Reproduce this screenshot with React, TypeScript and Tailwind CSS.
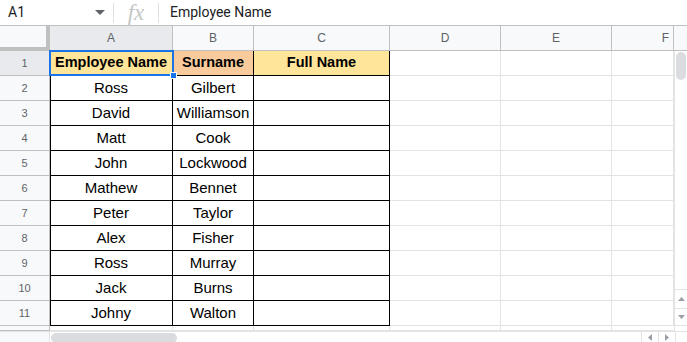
import React from 'react';

const rows = [
  ['Ross', 'Gilbert'],
  ['David', 'Williamson'],
  ['Matt', 'Cook'],
  ['John', 'Lockwood'],
  ['Mathew', 'Bennet'],
  ['Peter', 'Taylor'],
  ['Alex', 'Fisher'],
  ['Ross', 'Murray'],
  ['Jack', 'Burns'],
  ['Johny', 'Walton'],
];

const colWidths = 'grid-cols-[50px_123px_81px_136px_111px_111px_62px]';

function ColHeader({ label, active, align = 'center' }: { label: string; active?: boolean; align?: 'center' | 'right' }) {
  return (
    <div
      className={`h-[25px] border-r border-b border-[#c0c0c0] flex items-center text-[12px] text-[#5f6368] ${
        active ? 'bg-[#e8eaed]' : 'bg-[#f8f9fa]'
      } ${align === 'right' ? 'justify-end pr-[4px]' : 'justify-center'}`}
    >
      {label}
    </div>
  );
}

function RowHeader({ n, active }: { n: number; active?: boolean }) {
  return (
    <div
      className={`h-[25px] border-r border-b border-[#c0c0c0] flex items-center justify-center text-[11px] text-[#5f6368] ${
        active ? 'bg-[#e8eaed]' : 'bg-[#f8f9fa]'
      }`}
    >
      {n}
    </div>
  );
}

function Cell({ children, boxed, left, bg, bold }: { children?: React.ReactNode; boxed?: boolean; left?: boolean; bg?: string; bold?: boolean }) {
  return (
    <div
      className={`h-[25px] border-r border-b flex items-center justify-center whitespace-nowrap overflow-hidden ${
        boxed ? 'border-black' : 'border-[#e2e3e3]'
      } ${left ? 'shadow-[inset_1px_0_0_#000]' : ''} ${bg ?? 'bg-white'} ${
        bold ? 'font-bold text-[14.5px]' : 'text-[15px]'
      } text-black`}
    >
      {children}
    </div>
  );
}

export default function App() {
  return (
    <div className="w-[687px] h-[342px] bg-white overflow-hidden flex flex-col font-['Roboto',_'Liberation_Sans',_sans-serif]">
      {/* formula bar */}
      <div className="h-[26px] shrink-0 flex items-center border-b border-[#c0c0c0] text-[14px] text-[#202124]">
        <div className="w-[113px] flex items-center justify-between pl-[8px] pr-[8px]">
          <span>A1</span>
          <svg width="10" height="6" viewBox="0 0 10 6">
            <path d="M0 0 L10 0 L5 5 Z" fill="#5f6368" />
          </svg>
        </div>
        <div className="w-px h-[20px] bg-[#e0e0e0]" />
        <div className="w-[44px] flex justify-center text-[#c4c7c5] italic text-[23px] font-['Liberation_Serif',_serif] leading-none">
          fx
        </div>
        <div className="w-px h-[20px] bg-[#e0e0e0]" />
        <div className="pl-[11px]">Employee Name</div>
      </div>

      <div className="flex h-[305px] shrink-0">
        {/* sheet grid */}
        <div className={`grid ${colWidths} content-start w-[674px] font-['Liberation_Sans',_Arial,_sans-serif]`}>
          <div className="h-[25px] bg-[#f8f9fa] border-r-4 border-b-4 border-[#c0c0c0]" />
          <ColHeader label="A" active />
          <ColHeader label="B" />
          <ColHeader label="C" />
          <ColHeader label="D" />
          <ColHeader label="E" />
          <ColHeader label="F" align="right" />

          <RowHeader n={1} active />
          <div className="relative">
            <Cell boxed left bg="bg-[#ffe599]" bold>
              Employee Name
            </Cell>
            <div className="absolute -left-px -top-px right-[-1px] bottom-0 border-2 border-[#1a73e8] pointer-events-none" />
            <div className="absolute right-[-4px] bottom-[-3px] w-[7px] h-[7px] bg-[#1a73e8] border border-white" />
          </div>
          <Cell boxed bg="bg-[#f9cb9c]" bold>
            Surname
          </Cell>
          <Cell boxed bg="bg-[#ffe599]" bold>
            Full Name
          </Cell>
          <Cell />
          <Cell />
          <Cell />

          {rows.map(([first, last], i) => (
            <React.Fragment key={i}>
              <RowHeader n={i + 2} />
              <Cell boxed left>
                {first}
              </Cell>
              <Cell boxed>{last}</Cell>
              <Cell boxed />
              <Cell />
              <Cell />
              <Cell />
            </React.Fragment>
          ))}

          <div className="h-[5px] bg-[#f8f9fa] border-r border-b border-[#c0c0c0]" />
          <div className="h-[5px] border-r border-b border-[#e2e3e3]" />
          <div className="h-[5px] border-r border-b border-[#e2e3e3]" />
          <div className="h-[5px] border-r border-b border-[#e2e3e3]" />
          <div className="h-[5px] border-r border-b border-[#e2e3e3]" />
          <div className="h-[5px] border-r border-b border-[#e2e3e3]" />
          <div className="h-[5px] border-b border-[#e2e3e3]" />
        </div>

        {/* vertical scrollbar */}
        <div className="w-[13px] flex flex-col">
          <div className="h-[25px] bg-[#f8f9fa] border-b border-[#c0c0c0]" />
          <div className="flex-1 border-l border-[#e2e3e3] flex flex-col">
            <div className="pt-[1px] pl-[1px]">
              <div className="w-[10px] h-[28px] rounded-full bg-[#dadce0]" />
            </div>
            <div className="flex-1" />
            <div className="h-[19px] border-t border-[#e2e3e3] flex items-center justify-center">
              <svg width="7" height="4" viewBox="0 0 7 4">
                <path d="M0 4 L7 4 L3.5 0 Z" fill="#9aa0a6" />
              </svg>
            </div>
            <div className="h-[17px] border-t border-[#e2e3e3] flex items-center justify-center">
              <svg width="7" height="4" viewBox="0 0 7 4">
                <path d="M0 0 L7 0 L3.5 4 Z" fill="#9aa0a6" />
              </svg>
            </div>
            <div className="h-[6px] border-t border-[#e2e3e3]" />
          </div>
        </div>
      </div>

      {/* horizontal scrollbar */}
      <div className="flex h-[11px] shrink-0 border-t border-[#e2e3e3]">
        <div className="w-[50px] bg-[#f8f9fa] border-r border-[#e2e3e3]" />
        <div className="flex-1 pl-[1px] pt-[1px]">
          <div className="w-[126px] h-[10px] rounded-full bg-[#dadce0]" />
        </div>
        <div className="w-[17px] border-l border-[#e2e3e3] flex items-center justify-center">
          <svg width="4" height="7" viewBox="0 0 4 7">
            <path d="M4 0 L4 7 L0 3.5 Z" fill="#9aa0a6" />
          </svg>
        </div>
        <div className="w-[17px] border-l border-[#e2e3e3] flex items-center justify-center">
          <svg width="4" height="7" viewBox="0 0 4 7">
            <path d="M0 0 L0 7 L4 3.5 Z" fill="#9aa0a6" />
          </svg>
        </div>
        <div className="w-[12px] border-l border-[#e2e3e3]" />
      </div>
    </div>
  );
}
